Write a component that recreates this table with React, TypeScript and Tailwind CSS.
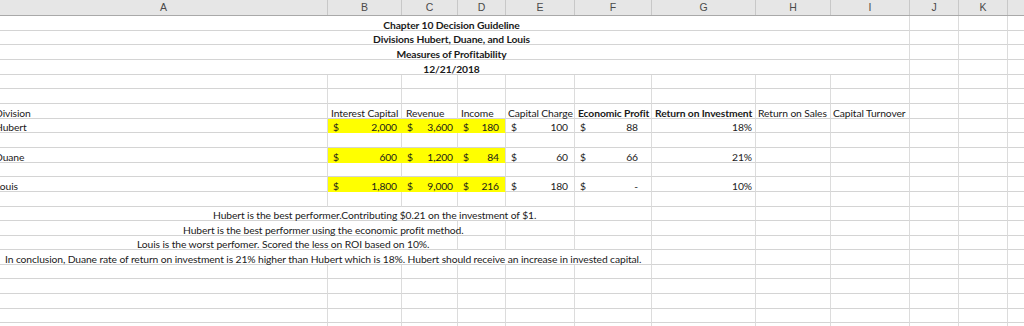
import React from "react";

const F = "font-['Lato','Liberation_Sans',sans-serif] text-[10.3px] tracking-[-0.1px] text-[#1a1a1a]";

const W = {
  A: "w-[328px]",
  B: "w-[74px]",
  C: "w-[56px]",
  D: "w-[48px]",
  E: "w-[69px]",
  F: "w-[77px]",
  G: "w-[104px]",
  H: "w-[75px]",
  I: "w-[79px]",
  J: "w-[49px]",
  K: "w-[49px]",
  L: "w-[16px]",
};

type CellProps = {
  w: string;
  r?: boolean;
  yellow?: boolean;
  className?: string;
  children?: React.ReactNode;
};

function Cell({ w, r = true, yellow = false, className = "", children }: CellProps) {
  return (
    <div
      className={`${w} shrink-0 h-full flex items-end whitespace-nowrap leading-[9px] border-b ${
        yellow ? "bg-[#ffff00] border-b-[#ffff00]" : "border-b-[#d4d4d4]"
      } ${r ? "border-r border-r-[#dcdcdc]" : ""} ${className}`}
    >
      {children}
    </div>
  );
}

function Row({ h, children }: { h: string; children?: React.ReactNode }) {
  return <div className={`flex ${h} w-full`}>{children}</div>;
}

const ORDER = ["A", "B", "C", "D", "E", "F", "G", "H", "I", "J", "K", "L"] as const;
type Col = (typeof ORDER)[number];

function EmptyRest({ from }: { from: Col }) {
  const start = ORDER.indexOf(from);
  return (
    <>
      {ORDER.slice(start).map((k) => (
        <Cell key={k} w={W[k]} r={k !== "L"} />
      ))}
    </>
  );
}

function EmptyRow({ h }: { h: string }) {
  return (
    <Row h={h}>
      <EmptyRest from="A" />
    </Row>
  );
}

function Acct({ v, pr = "pr-[5px]" }: { v: string; pr?: string }) {
  return (
    <div className="flex w-full justify-between">
      <span className="pl-[5px]">$</span>
      <span className={pr}>{v}</span>
    </div>
  );
}

function DataRow({
  h,
  name,
  b,
  c,
  d,
  e,
  f,
  roi,
}: {
  h: string;
  name: string;
  b: string;
  c: string;
  d: string;
  e: string;
  f: string;
  roi: string;
}) {
  return (
    <Row h={h}>
      <Cell w={W.A} className="overflow-hidden">
        <span className="-ml-[5px]">{name}</span>
      </Cell>
      <Cell w={W.B} r={false} yellow>
        <Acct v={b} />
      </Cell>
      <Cell w={W.C} r={false} yellow>
        <Acct v={c} />
      </Cell>
      <Cell w={W.D} yellow>
        <Acct v={d} pr="pr-[6px]" />
      </Cell>
      <Cell w={W.E}>
        <Acct v={e} pr="pr-[6px]" />
      </Cell>
      <Cell w={W.F}>
        <Acct v={f} pr="pr-[13px]" />
      </Cell>
      <Cell w={W.G} className="justify-end">
        <span className="pr-[3px]">{roi}</span>
      </Cell>
      <EmptyRest from="H" />
    </Row>
  );
}

function TitleRow({ h, text }: { h: string; text: string }) {
  return (
    <Row h={h}>
      <Cell w={W.A} r={false} />
      <Cell w="w-[247px]" r={false} className="justify-center font-bold">
        <span>{text}</span>
      </Cell>
      <Cell w="w-[335px]" />
      <Cell w={W.J} />
      <Cell w={W.K} />
      <Cell w={W.L} r={false} />
    </Row>
  );
}

function NoteRow({
  h,
  span,
  spanW,
  pl,
  text,
}: {
  h: string;
  span: Col;
  spanW: string;
  pl: string;
  text: string;
}) {
  return (
    <Row h={h}>
      <Cell w={spanW} className={pl}>
        <span>{text}</span>
      </Cell>
      <EmptyRest from={span} />
    </Row>
  );
}

export default function App() {
  return (
    <div className={`w-[1024px] h-[326px] overflow-hidden bg-white ${F}`}>
      {/* column header */}
      <div className="flex h-[16px] bg-[#e6e6e6] border-b border-b-[#a9a9a9]">
        {ORDER.map((k) => (
          <div
            key={k}
            className={`${W[k]} shrink-0 h-full flex items-center justify-center font-['Liberation_Sans',sans-serif] text-[10.5px] tracking-normal text-[#4a4a4a] ${
              k !== "L" ? "border-r border-r-[#c8c8c8]" : ""
            }`}
          >
            {k !== "L" ? k : ""}
          </div>
        ))}
      </div>

      <TitleRow h="h-[15px]" text="Chapter 10 Decision Guideline" />
      <TitleRow h="h-[14px]" text="Divisions Hubert, Duane, and Louis" />
      <TitleRow h="h-[15px]" text="Measures of Profitability" />
      <TitleRow h="h-[15px]" text="12/21/2018" />
      <EmptyRow h="h-[14px]" />
      <EmptyRow h="h-[15px]" />

      {/* header row */}
      <Row h="h-[15px]">
        <Cell w={W.A} className="overflow-hidden">
          <span className="-ml-[5px]">Division</span>
        </Cell>
        <Cell w={W.B} className="pl-[3px]">
          <span>Interest Capital</span>
        </Cell>
        <Cell w={W.C} className="pl-[4px]">
          <span>Revenue</span>
        </Cell>
        <Cell w={W.D} className="pl-[3px]">
          <span>Income</span>
        </Cell>
        <Cell w={W.E} className="pl-[2px]">
          <span>Capital Charge</span>
        </Cell>
        <Cell w={W.F} className="pl-[3px] font-bold">
          <span>Economic Profit</span>
        </Cell>
        <Cell w={W.G} className="pl-[3px] font-bold">
          <span>Return on Investment</span>
        </Cell>
        <Cell w={W.H} className="pl-[2px]">
          <span>Return on Sales</span>
        </Cell>
        <Cell w={W.I} className="pl-[2px]">
          <span>Capital Turnover</span>
        </Cell>
        <Cell w={W.J} />
        <Cell w={W.K} />
        <Cell w={W.L} r={false} />
      </Row>

      <DataRow h="h-[14px]" name="Hubert" b="2,000" c="3,600" d="180" e="100" f="88" roi="18%" />
      <EmptyRow h="h-[15px]" />
      <DataRow h="h-[15px]" name="Duane" b="600" c="1,200" d="84" e="60" f="66" roi="21%" />
      <EmptyRow h="h-[14px]" />
      <DataRow h="h-[15px]" name="Louis" b="1,800" c="9,000" d="216" e="180" f="-" roi="10%" />
      <EmptyRow h="h-[15px]" />

      <NoteRow
        h="h-[14px]"
        span="F"
        spanW="w-[575px]"
        pl="pl-[213px]"
        text="Hubert is the best performer.Contributing $0.21 on the investment of $1."
      />
      <NoteRow
        h="h-[15px]"
        span="D"
        spanW="w-[458px]"
        pl="pl-[183px]"
        text="Hubert is the best performer using the economic profit method."
      />
      <NoteRow
        h="h-[14px]"
        span="D"
        spanW="w-[458px]"
        pl="pl-[137px]"
        text="Louis is the worst perfomer. Scored the less on ROI based on 10%."
      />
      <NoteRow
        h="h-[15px]"
        span="G"
        spanW="w-[652px]"
        pl="pl-[5px]"
        text="In conclusion, Duane rate of return on investment is 21% higher than Hubert which is 18%. Hubert should receive an increase in invested capital."
      />

      <EmptyRow h="h-[14px]" />
      <EmptyRow h="h-[15px]" />
      <EmptyRow h="h-[15px]" />
      <EmptyRow h="h-[14px]" />
      <EmptyRow h="h-[15px]" />
    </div>
  );
}
